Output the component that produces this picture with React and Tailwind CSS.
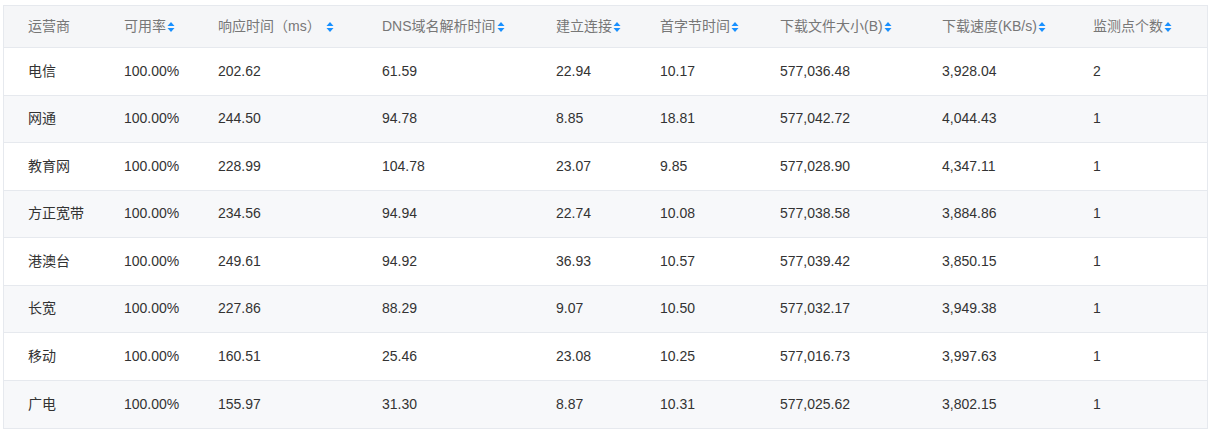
const cols = [
  { t: '运营商', w: 'w-[96px]' },
  { t: '可用率', w: 'w-[94px]', s: true },
  { t: '响应时间（ms）', w: 'w-[164px]', s: true, gap: true },
  { t: 'DNS域名解析时间', w: 'w-[174px]', s: true },
  { t: '建立连接', w: 'w-[104px]', s: true },
  { t: '首字节时间', w: 'w-[120px]', s: true },
  { t: '下载文件大小(B)', w: 'w-[162px]', s: true },
  { t: '下载速度(KB/s)', w: 'w-[151px]', s: true },
  { t: '监测点个数', w: 'flex-1', s: true },
];

const rows = [
  ['电信', '100.00%', '202.62', '61.59', '22.94', '10.17', '577,036.48', '3,928.04', '2'],
  ['网通', '100.00%', '244.50', '94.78', '8.85', '18.81', '577,042.72', '4,044.43', '1'],
  ['教育网', '100.00%', '228.99', '104.78', '23.07', '9.85', '577,028.90', '4,347.11', '1'],
  ['方正宽带', '100.00%', '234.56', '94.94', '22.74', '10.08', '577,038.58', '3,884.86', '1'],
  ['港澳台', '100.00%', '249.61', '94.92', '36.93', '10.57', '577,039.42', '3,850.15', '1'],
  ['长宽', '100.00%', '227.86', '88.29', '9.07', '10.50', '577,032.17', '3,949.38', '1'],
  ['移动', '100.00%', '160.51', '25.46', '23.08', '10.25', '577,016.73', '3,997.63', '1'],
  ['广电', '100.00%', '155.97', '31.30', '8.87', '10.31', '577,025.62', '3,802.15', '1'],
];

function SortIcon() {
  return (
    <svg width="8" height="12" viewBox="0 0 8 12" className="inline-block ml-px">
      <path d="M4 1 L7.5 5 H0.5 Z" fill="#1890ff" />
      <path d="M4 11 L7.5 7 H0.5 Z" fill="#1890ff" />
    </svg>
  );
}

export default function App() {
  return (
    <div className="w-[1214px] h-[437px] bg-white pt-[5px] pl-[3px]" style={{ fontFamily: '"Liberation Sans", "Noto Sans CJK SC", sans-serif' }}>
      <div className="w-[1205px] border border-[#e6e9ee] text-[14px] text-[#333]">
        <div className="flex h-[42px] items-center bg-[#f5f6f8] border-b border-[#e6e9ee] text-[#777]">
          {cols.map((c, i) => (
            <div key={i} className={`${c.w} pl-6 flex items-center`}>
              {c.t}
              {c.s && (c.gap ? <span className="ml-1"><SortIcon /></span> : <SortIcon />)}
            </div>
          ))}
        </div>
        {rows.map((r, ri) => (
          <div key={ri} className={`flex h-[47.5px] items-center ${ri < rows.length - 1 ? 'border-b border-[#e6e9ee]' : ''} ${ri % 2 ? 'bg-[#f7f8fa]' : 'bg-white'}`}>
            {r.map((v, i) => (
              <div key={i} className={`${cols[i].w} pl-6`}>{v}</div>
            ))}
          </div>
        ))}
      </div>
    </div>
  );
}
